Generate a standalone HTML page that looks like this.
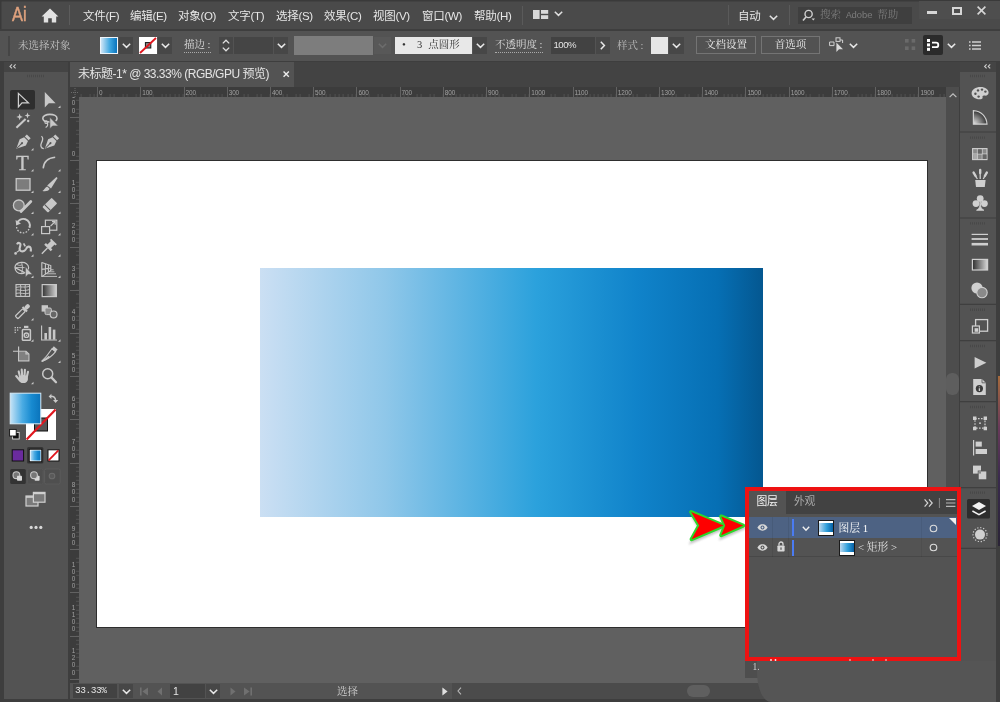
<!DOCTYPE html>
<html lang="zh-CN">
<head>
<meta charset="utf-8">
<title>Adobe Illustrator</title>
<style>
*{box-sizing:border-box;margin:0;padding:0}
html,body{width:1000px;height:702px;overflow:hidden;background:#3e3e3e}
html{opacity:.9999}
body{position:relative;font-family:"Liberation Sans","Noto Sans CJK SC",sans-serif;font-size:12px;color:#dcdcdc}
.a{position:absolute}
.sans{font-family:"Liberation Sans","Noto Sans CJK SC",sans-serif}
.serif{font-family:"Liberation Serif","Noto Serif CJK SC",serif}
.t{position:absolute;white-space:nowrap;line-height:1}
svg{position:absolute;overflow:visible}
/* menubar */
#menubar{left:0;top:0;width:1000px;height:29px;background:#4a4a4a;border-top:1px solid #3a3a3a;box-shadow:inset 1.5px 0.5px 0 #3a3a3a}
#menubar .m{position:absolute;top:8px;font-size:11.5px;line-height:15px;color:#e6e6e6;white-space:nowrap;letter-spacing:-0.3px}
/* control bar */
#ctrl{left:0;top:30.5px;width:1000px;height:30.5px;background:#535353}
#ctrl .lbl{position:absolute;top:8.5px;font-size:10.5px;line-height:13px;color:#c4c4c4;white-space:nowrap}
.dd{position:absolute;background:#474747}
/* tab bar */
#tabbar{left:70px;top:62px;width:890px;height:25px;background:#434343}
#tab{left:0;top:0;width:224px;height:25px;background:#535353}
/* toolbox */
#tbx{left:4px;top:62px;width:64px;height:637px;background:#535353}
#tbxh{left:0;top:0;width:64px;height:10px;background:#444}
/* canvas */
#canvas{left:70px;top:87px;width:876px;height:596px;background:#606060;overflow:hidden}
#hr{left:0;top:0;width:876px;height:10px;background:#3c3c3c}
#vr{left:0;top:0;width:9px;height:596px;background:#3c3c3c}
#art{left:26.3px;top:72.5px;width:831.7px;height:468px;background:#fff;border:1.3px solid #2e2e2e}
#grad{left:190.4px;top:180.8px;width:502.4px;height:249.5px;background:linear-gradient(90deg,#cbdff3 0%,#8fc7e9 25%,#2ba1dc 55%,#1083ca 75%,#066fb4 91%,#045790 100%)}

#hr i{position:absolute;top:0;width:1px;height:10px;background:#626262}
#hr b{position:absolute;top:2px;font:normal 6.4px/7px "Liberation Sans",sans-serif;color:#a0a0a0;letter-spacing:-0.1px}
#hr .tk{position:absolute;left:0;bottom:0;width:100%;height:3px;background:repeating-linear-gradient(90deg,#707070 0,#707070 0.8px,transparent 0.8px,transparent 4.323px);background-position:26.6px 0;opacity:.4}
#vr i{position:absolute;left:0;height:1px;width:9px;background:#626262}
#vr b{position:absolute;left:1px;width:5px;font:normal 6.4px/7.2px "Liberation Sans",sans-serif;color:#a0a0a0;text-align:center}
#vr u{display:block;text-decoration:none;height:7.2px}
#vr .tk{position:absolute;right:0;top:0;height:100%;width:3px;background:repeating-linear-gradient(180deg,#707070 0,#707070 0.8px,transparent 0.8px,transparent 4.323px);background-position:0 29.8px;opacity:.4}
#corner{left:0;top:0;width:9px;height:10px;background:#3c3c3c}
/* status */
#status{left:70px;top:683px;width:876px;height:16px;background:#535353}
/* vscroll */
#vs{left:946px;top:87px;width:13px;height:596px;background:#4d4d4d}
/* dock */
#dock{left:960px;top:62px;width:36px;height:640px;background:#535353}
#dockh{left:0;top:0;width:36px;height:10px;background:#444}
/* layers */
#lay{left:745px;top:486.5px;width:215.5px;height:174.5px;border:4px solid #ee1212;background:#535353}
</style>
</head>
<body>
<!-- MENUBAR -->
<div class="a" id="menubar">
  <div class="t sans" style="left:11.5px;top:2.5px;font-size:20px;color:#dfa27e;-webkit-text-stroke:0.45px #dfa27e;transform:scaleX(0.82);transform-origin:0 0">Ai</div>
  <svg style="left:41px;top:6.5px" width="18" height="15" viewBox="0 0 18 15"><path d="M9 0.6 L0.6 8.6 H2.8 V14.6 H7.2 V10.2 H10.8 V14.6 H15.2 V8.6 H17.4 Z" fill="#e2e2e2"/></svg>
  <div class="a" style="left:68.5px;top:4px;width:1px;height:20px;background:#5c5c5c"></div>
  <span class="m" style="left:83px">文件(F)</span>
  <span class="m" style="left:130px">编辑(E)</span>
  <span class="m" style="left:178px">对象(O)</span>
  <span class="m" style="left:228px">文字(T)</span>
  <span class="m" style="left:276px">选择(S)</span>
  <span class="m" style="left:324px">效果(C)</span>
  <span class="m" style="left:373px">视图(V)</span>
  <span class="m" style="left:422px">窗口(W)</span>
  <span class="m" style="left:474px">帮助(H)</span>
  <span class="m" style="left:738px">自动</span>

  <svg style="left:533px;top:8.6px" width="16" height="10" viewBox="0 0 16 10"><rect x="0" y="0" width="6.6" height="9" fill="#d8d8d8"/><rect x="8" y="0" width="7.2" height="3.8" fill="#d8d8d8"/><rect x="8" y="5.2" width="7.2" height="3.8" fill="#d8d8d8"/></svg>
  <div class="a" style="left:521.5px;top:5px;width:1px;height:19px;background:#5a5a5a"></div>
  <svg style="left:554.4px;top:10.2px" width="9" height="6" viewBox="0 0 9 6"><path d="M0.8 0.8 L4.5 4.4 L8.2 0.8" stroke="#e0e0e0" stroke-width="1.5" fill="none"/></svg>
  <div class="a" style="left:728px;top:4px;width:1px;height:20px;background:#5a5a5a"></div>
  <svg style="left:769px;top:14px" width="9" height="6" viewBox="0 0 9 6"><path d="M0.8 0.8 L4.5 4.4 L8.2 0.8" stroke="#e0e0e0" stroke-width="1.5" fill="none"/></svg>
  <div class="a" style="left:789px;top:4px;width:1px;height:20px;background:#5a5a5a"></div>
  <div class="a" style="left:798px;top:6px;width:114px;height:17px;background:#3f3f3f">
    <svg style="left:4px;top:2px" width="14" height="13" viewBox="0 0 14 13"><circle cx="6.6" cy="5" r="3.6" stroke="#d0d0d0" stroke-width="1.4" fill="none"/><path d="M4 8 L1 11.6" stroke="#d0d0d0" stroke-width="1.6"/><path d="M9.6 9.6 H13 L11.3 11.6 Z" fill="#d0d0d0"/></svg>
    <span class="t serif" style="left:22px;top:3px;font-size:10.5px;color:#7c7c7c">搜索<span style="font-family:'Liberation Mono',monospace;font-size:9.5px;letter-spacing:-0.45px;margin:0 5px">Adobe</span>帮助</span>
  </div>
  <div class="a" style="left:919px;top:0;width:81px;height:18px;background:#4e4e4e"></div>
  <div class="a" style="left:927px;top:10px;width:10px;height:3px;background:#d6d6d6"></div>
  <div class="a" style="left:952px;top:6px;width:10px;height:8px;border:2px solid #d6d6d6"></div>
  <svg style="left:977px;top:5px" width="9" height="9" viewBox="0 0 9 9"><path d="M0.6 0.6 L8.4 8.4 M8.4 0.6 L0.6 8.4" stroke="#d6d6d6" stroke-width="1.6"/></svg>
</div>
<!-- CONTROL BAR -->
<div class="a" id="ctrl">

  <div class="a" style="left:8px;top:5px;width:2px;height:20px;background:#454545"></div>
  <span class="lbl serif" style="left:18px">未选择对象</span>
  <div class="a" style="left:100px;top:6px;width:18px;height:17px;border:1px solid #eef5fb;background:linear-gradient(90deg,#cfe5f6,#3fa7e0 55%,#0a74bd)"></div>
  <div class="dd" style="left:119px;top:6px;width:14px;height:17px;background:#474747"><svg style="left:2.5px;top:6px" width="9" height="6" viewBox="0 0 9 6"><path d="M0.8 0.8 L4.5 4.4 L8.2 0.8" stroke="#e8e8e8" stroke-width="1.5" fill="none"/></svg></div>
  <div class="a" style="left:139px;top:6px;width:18px;height:17px;background:#fff">
    <svg style="left:0;top:0" width="18" height="17" viewBox="0 0 18 17"><rect x="6.4" y="5.6" width="5.4" height="5.4" fill="#888" stroke="#111" stroke-width="1"/><path d="M1 16 L17 1" stroke="#e0161e" stroke-width="1.8"/></svg>
  </div>
  <div class="dd" style="left:158px;top:6px;width:14px;height:17px;background:#474747"><svg style="left:2.5px;top:6px" width="9" height="6" viewBox="0 0 9 6"><path d="M0.8 0.8 L4.5 4.4 L8.2 0.8" stroke="#e8e8e8" stroke-width="1.5" fill="none"/></svg></div>
  <span class="lbl serif" style="left:184px;color:#dedede;border-bottom:1px dotted #aaa;line-height:12.5px">描边 :</span>
  <div class="dd" style="left:219px;top:6px;width:14px;height:17px">
    <svg style="left:3px;top:2px" width="8" height="13" viewBox="0 0 8 13"><path d="M0.8 4.4 L4 1.2 L7.2 4.4 M0.8 8.6 L4 11.8 L7.2 8.6" stroke="#e0e0e0" stroke-width="1.3" fill="none"/></svg>
  </div>
  <div class="dd" style="left:234px;top:6px;width:39px;height:17px;background:#454545"></div>
  <div class="dd" style="left:274px;top:6px;width:14px;height:17px;background:#474747"><svg style="left:2.5px;top:6px" width="9" height="6" viewBox="0 0 9 6"><path d="M0.8 0.8 L4.5 4.4 L8.2 0.8" stroke="#e8e8e8" stroke-width="1.5" fill="none"/></svg></div>
  <div class="a" style="left:294px;top:5px;width:79px;height:19px;background:#7d7d7d"></div>
  <div class="dd" style="left:374px;top:6px;width:17px;height:17px;background:#585858"><svg style="left:4.0px;top:6px" width="9" height="6" viewBox="0 0 9 6"><path d="M0.8 0.8 L4.5 4.4 L8.2 0.8" stroke="#6c6c6c" stroke-width="1.5" fill="none"/></svg></div>
  <div class="a" style="left:395px;top:6px;width:77px;height:17px;background:#e8e8e8">
    <span class="t serif" style="left:7px;top:2.5px;font-size:11px;color:#333">•</span>
    <span class="t serif" style="left:22px;top:3px;font-size:10.5px;color:#333">3<span style="margin-left:6px">点圆形</span></span>
  </div>
  <div class="dd" style="left:473px;top:6px;width:14px;height:17px;background:#474747"><svg style="left:2.5px;top:6px" width="9" height="6" viewBox="0 0 9 6"><path d="M0.8 0.8 L4.5 4.4 L8.2 0.8" stroke="#e8e8e8" stroke-width="1.5" fill="none"/></svg></div>
  <span class="lbl serif" style="left:495px;color:#dedede;border-bottom:1px dotted #aaa;line-height:12.5px">不透明度 :</span>
  <div class="dd" style="left:551px;top:6px;width:44px;height:17px;background:#424242"><span class="t sans" style="left:2.5px;top:3px;font-size:9.6px;color:#e4e4e4;letter-spacing:-0.5px">100%</span></div>
  <div class="dd" style="left:596px;top:6px;width:14px;height:17px"><svg style="left:4px;top:4px" width="6" height="9" viewBox="0 0 6 9"><path d="M0.8 0.8 L4.4 4.5 L0.8 8.2" stroke="#e8e8e8" stroke-width="1.5" fill="none"/></svg></div>
  <span class="lbl serif" style="left:617px;color:#bdbdbd">样式 :</span>
  <div class="a" style="left:651px;top:6px;width:17px;height:17px;background:#e6e6e6"></div>
  <div class="dd" style="left:669px;top:6px;width:15px;height:17px;background:#474747"><svg style="left:3.0px;top:6px" width="9" height="6" viewBox="0 0 9 6"><path d="M0.8 0.8 L4.5 4.4 L8.2 0.8" stroke="#e8e8e8" stroke-width="1.5" fill="none"/></svg></div>
  <div class="a" style="left:696px;top:5px;width:60px;height:18px;border:1px solid #747474;background:#525252"><span class="t serif" style="left:0;width:58px;text-align:center;top:3px;font-size:10.5px;color:#ededed">文档设置</span></div>
  <div class="a" style="left:761px;top:5px;width:59px;height:18px;border:1px solid #747474;background:#525252"><span class="t serif" style="left:0;width:57px;text-align:center;top:3px;font-size:10.5px;color:#ededed">首选项</span></div>
  <svg style="left:829px;top:6px" width="17" height="16" viewBox="0 0 17 16"><rect x="7" y="0.8" width="4" height="3.6" stroke="#d0d0d0" stroke-width="1" fill="none"/><path d="M0.6 5 H5 V8.6 H0.6 Z" stroke="#d0d0d0" stroke-width="1" fill="none"/><path d="M7.4 5.4 V15 L10 12.2 H14 Z" fill="#d8d8d8"/><path d="M11 3 H13.6 V6" stroke="#d0d0d0" stroke-width="1" fill="none"/></svg>
  <svg style="left:849px;top:12px" width="9" height="6" viewBox="0 0 9 6"><path d="M0.8 0.8 L4.5 4.4 L8.2 0.8" stroke="#e8e8e8" stroke-width="1.5" fill="none"/></svg>
  <svg style="left:905px;top:8px" width="11" height="12" viewBox="0 0 11 12" fill="#6a6a6a"><rect x="0" y="0" width="3.6" height="3.6"/><rect x="6.6" y="0" width="3.6" height="3.6"/><rect x="0" y="7.4" width="3.6" height="3.6"/><rect x="6.6" y="7.4" width="3.6" height="3.6"/></svg>
  <div class="a" style="left:923px;top:4px;width:20px;height:20px;background:#2b2b2b;border-radius:2px">
    <svg style="left:4px;top:4px" width="13" height="12" viewBox="0 0 13 12"><rect x="0" y="0" width="3" height="3" fill="#fff"/><rect x="0" y="4.4" width="3" height="3" fill="#fff"/><rect x="0" y="8.8" width="3" height="3" fill="#fff"/><path d="M5 3.6 H9 A2.2 2.2 0 0 1 9 8.2 H5" stroke="#fff" stroke-width="1.8" fill="none"/></svg>
  </div>
  <svg style="left:947px;top:12px" width="9" height="6" viewBox="0 0 9 6"><path d="M0.8 0.8 L4.5 4.4 L8.2 0.8" stroke="#e8e8e8" stroke-width="1.5" fill="none"/></svg>
  <svg style="left:969px;top:10px" width="12" height="9" viewBox="0 0 12 9"><path d="M3 1 H12 M3 4.5 H12 M3 8 H12" stroke="#d0d0d0" stroke-width="1.4"/><path d="M0 1 H1.6 M0 4.5 H1.6 M0 8 H1.6" stroke="#d0d0d0" stroke-width="1.4"/></svg>
</div>
<!-- TOOLBOX -->
<div class="a" id="tbx"><div class="a" id="tbxh"></div></div>
<svg id="tools" style="left:0;top:0" width="70" height="702" viewBox="0 0 70 702" fill="none" stroke="none">
<defs>
<linearGradient id="gfill" x1="0" y1="0" x2="1" y2="0"><stop offset="0" stop-color="#c6e3f6"/><stop offset="0.4" stop-color="#4aabe3"/><stop offset="0.7" stop-color="#178ad0"/><stop offset="1" stop-color="#0a73bb"/></linearGradient>
<linearGradient id="ggray" x1="0" y1="0" x2="1" y2="0"><stop offset="0" stop-color="#333"/><stop offset="1" stop-color="#d0d0d0"/></linearGradient>
<path id="fly" d="M2.5 0 V2.5 H0 Z" fill="#c8c8c8"/>
<g id="pen"><path d="M0 8.2 L-4.2 0.5 L-2.6 -3.4 H2.6 L4.2 0.5 Z" fill="#c8c8c8"/><rect x="-2.6" y="-6.6" width="5.2" height="2.4" fill="#c8c8c8"/><path d="M0 7.5 V2" stroke="#535353" stroke-width="0.9"/><circle cx="0" cy="1.5" r="1" fill="#535353"/></g>
</defs>
<!-- row0 -->
<rect x="10" y="90" width="25" height="19.5" rx="2" fill="#2e2e2e"/>
<path d="M18.4 93.4 V106.8 L22 102.8 H28.4 Z" stroke="#cfcfcf" stroke-width="1.25" stroke-linejoin="miter"/>
<path d="M44.8 92 V107.6 L48.8 103.2 H55.6 Z" fill="#c8c8c8"/>
<use href="#fly" x="58" y="105.5"/>
<!-- row1 wand -->
<path d="M16.4 127.8 L25.6 119" stroke="#c8c8c8" stroke-width="2.1"/>
<path d="M19.6 113.6 L20.5 116 L22.9 116.9 L20.5 117.8 L19.6 120.2 L18.7 117.8 L16.3 116.9 L18.7 116 Z" fill="#c8c8c8"/>
<path d="M27.5 112.6 L28.3 114.7 L30.4 115.5 L28.3 116.3 L27.5 118.4 L26.7 116.3 L24.6 115.5 L26.7 114.7 Z" fill="#c8c8c8"/>
<circle cx="28.2" cy="121" r="1.2" fill="#c8c8c8"/>
<!-- lasso -->
<path d="M50 122 C45 122 42.8 120 42.8 118.2 C42.8 116 46 114.4 49.8 114.4 C53.8 114.4 57 116 57 118.4 C57 119.4 56.4 120.2 55.6 120.8" stroke="#c8c8c8" stroke-width="1.6"/>
<circle cx="46.2" cy="122.2" r="1.3" stroke="#c8c8c8" stroke-width="1.1"/>
<path d="M47.4 122.8 C48 124.6 47.4 126.6 45.6 127.6" stroke="#c8c8c8" stroke-width="1.2"/>
<path d="M49.8 117.2 V128.8 L52.6 126 H58.4 Z" fill="#c8c8c8" stroke="#535353" stroke-width="0.7"/>
<!-- row2 pen -->
<g transform="translate(23.2,141.9) rotate(45) scale(1.04,1.19)"><use href="#pen"/></g>
<use href="#fly" x="31" y="148"/>
<g transform="translate(51.65,141.9) rotate(45) scale(1.04,1.19)"><use href="#pen"/></g>
<path d="M41.4 136.2 C43.6 137.6 42.6 140.6 41.4 143 C40.2 145.6 41 148.6 43.8 148.6" stroke="#c8c8c8" stroke-width="1.3"/>
<!-- row3 T -->
<text x="22.5" y="169.5" text-anchor="middle" font-family="Liberation Serif, serif" font-size="21" fill="#c8c8c8" stroke="#c8c8c8" stroke-width="0.3">T</text>
<use href="#fly" x="31" y="169"/>
<path d="M43.2 168.4 C43.5 162 48 158 55.2 157.2" stroke="#c8c8c8" stroke-width="1.5"/>
<use href="#fly" x="58" y="169"/>
<!-- row4 rect / brush -->
<rect x="16.2" y="178.6" width="13.8" height="11.6" fill="#7c7c7c" stroke="#c8c8c8" stroke-width="1.3"/>
<use href="#fly" x="31" y="190.5"/>
<path d="M56.4 177 L57.6 178 L51 188.6 L47.2 185.6 Z" fill="#c8c8c8"/>
<path d="M47.2 186.6 L49.6 188.8 C48.6 191.4 45 191.4 42.4 191 C44.4 190 44.8 187.4 47.2 186.6 Z" fill="#c8c8c8"/>
<use href="#fly" x="58" y="190.5"/>
<!-- row5 shaper / eraser -->
<circle cx="18.8" cy="205.4" r="5.4" fill="#7c7c7c" stroke="#c8c8c8" stroke-width="1.3"/>
<path d="M30.8 201.6 L21 211.6" stroke="#c8c8c8" stroke-width="2.8" stroke-linecap="round"/>
<use href="#fly" x="31" y="211.5"/>
<g transform="translate(49.8,205.2) rotate(-45)"><rect x="-6.6" y="-4" width="13.2" height="8" rx="1" fill="#c8c8c8"/><path d="M-3.2 -4 V4" stroke="#535353" stroke-width="1"/></g>
<use href="#fly" x="58" y="211.5"/>
<!-- row6 rotate / scale -->
<path d="M17 223.5 A6.6 6.6 0 0 1 29.6 227.6" stroke="#c8c8c8" stroke-width="1.9"/>
<path d="M29.4 226 A6.4 6.4 0 1 1 16.6 227" stroke="#c8c8c8" stroke-width="1.3" stroke-dasharray="1.6 1.4"/>
<path d="M15.6 220 L16.2 225.4 L21 223.6 Z" fill="#c8c8c8"/>
<use href="#fly" x="31" y="233"/>
<rect x="45.4" y="220.2" width="11.4" height="10" stroke="#c8c8c8" stroke-width="1.2"/>
<rect x="41.6" y="226.6" width="8" height="7" stroke="#c8c8c8" stroke-width="1.2" fill="#535353"/>
<path d="M50.6 226 L55 221.8 M52 221.6 H55.2 V224.8" stroke="#c8c8c8" stroke-width="1.1"/>
<use href="#fly" x="58" y="233"/>
<!-- row7 warp / pin -->
<circle cx="15.6" cy="253.4" r="1.35" fill="#c8c8c8"/>
<path d="M16.6 252.4 L19.6 250.2" stroke="#c8c8c8" stroke-width="1.1"/>
<path d="M17 244.4 C18 242 20.8 242.6 20.4 245.2 C20 247.6 18.4 249.4 20.6 250.8 C23 252.2 25.2 250.6 26.2 248.6 C27.2 246.4 29.8 245.8 30.6 247.8 C31.2 249.4 30.8 250.8 30.6 251.6" stroke="#c8c8c8" stroke-width="2.1"/>
<path d="M23.6 243.4 L25.2 246.4" stroke="#c8c8c8" stroke-width="1.7"/>
<use href="#fly" x="31" y="254.2"/>
<g transform="translate(47.9,247.6) rotate(45)"><rect x="-2.6" y="-7.6" width="5.2" height="6.4" fill="#c8c8c8"/><rect x="-4.6" y="-1.8" width="9.2" height="2.4" fill="#c8c8c8"/><rect x="-4" y="-8.6" width="8" height="1.8" fill="#c8c8c8"/><path d="M0 0.6 V8.6" stroke="#c8c8c8" stroke-width="1.4"/></g>
<use href="#fly" x="58" y="254.2"/>
<!-- row8 shape builder / perspective -->
<path d="M15 267.6 C15 264.6 17.4 262.8 21.4 262.4 C25.4 262 28.6 264.4 28.6 267.6 C28.6 268.4 28.4 269 28 269.6 M25 272.8 C23.8 273.4 22.6 273.6 21.4 273.6 C17.6 273.6 15 271 15 267.6 Z" stroke="#c8c8c8" stroke-width="1.2"/>
<path d="M15.4 267.6 H24.6 M21.6 262.6 C22.6 265 22.8 269 21.8 273.4 M17 264.6 C19 265.6 20.6 265.6 22 264.8" stroke="#c8c8c8" stroke-width="0.9"/>
<path d="M25.4 266.6 V277.2 L28 274.6 H32.6 Z" fill="#c8c8c8" stroke="#535353" stroke-width="0.6"/>
<use href="#fly" x="31" y="275.5"/>
<g stroke="#c8c8c8" stroke-width="1.1">
<path d="M41.8 262.2 V277 M41.8 262.4 L50.8 265.6 V270.4 L41.8 276.6 M45.4 263.8 V274 M48.4 264.8 V272 M41.8 269.4 L50.8 268"/>
<path d="M50.8 269.8 H53.6 M49.4 271.8 H54.4 M46.6 273.8 H56 M42 276.4 H57" stroke-width="0.9"/>
</g>
<use href="#fly" x="58" y="275.5"/>
<!-- row9 mesh / gradient -->
<g stroke="#c8c8c8" stroke-width="1.1">
<rect x="16" y="284.6" width="13.6" height="11.8"/>
<path d="M16 290 C19 289 21 292 29.6 289.6 M20.4 284.6 C22 288 19 292 21 296.4 M25.4 284.6 C24 288 27 292 25 296.4 M16 293.4 C20 292 25 295 29.6 293 M16 287.4 C20 286 25 288 29.6 286.4" stroke-width="0.9"/>
</g>
<rect x="42.2" y="284.6" width="14.2" height="12" fill="url(#ggray)" stroke="#c8c8c8" stroke-width="1.2"/>
<!-- row10 eyedropper / blend -->
<g transform="translate(22.5,311.5) rotate(45)">
<rect x="-1.9" y="-2" width="3.8" height="10.4" rx="0.8" stroke="#c8c8c8" stroke-width="1.2"/>
<rect x="-3.2" y="-4.2" width="6.4" height="2" fill="#c8c8c8"/>
<rect x="-2" y="-9.4" width="4" height="5.6" rx="1.6" fill="#c8c8c8"/>
</g>
<use href="#fly" x="31" y="318"/>
<rect x="41.6" y="305.2" width="6.4" height="6.4" fill="#c8c8c8"/>
<rect x="45" y="308" width="6.4" height="6.6" rx="1.4" fill="#8a8a8a" stroke="#c8c8c8" stroke-width="1"/>
<circle cx="53.6" cy="314.4" r="3.4" fill="#666" stroke="#c8c8c8" stroke-width="1.2"/>
<!-- row11 spray / graph -->
<g fill="#c8c8c8">
<rect x="14.6" y="327" width="1.3" height="1.3"/><rect x="17" y="327" width="1.3" height="1.3"/><rect x="19.4" y="327" width="1.3" height="1.3"/>
<rect x="14.6" y="329.4" width="1.3" height="1.3"/><rect x="17" y="329.4" width="1.3" height="1.3"/>
<rect x="14.6" y="331.8" width="1.3" height="1.3"/>
<rect x="24" y="325.8" width="4.4" height="2.2"/>
</g>
<rect x="22.4" y="329.4" width="8" height="10.8" rx="0.8" stroke="#c8c8c8" stroke-width="1.5"/>
<circle cx="26.4" cy="335.2" r="2.2" stroke="#c8c8c8" stroke-width="1.4"/><circle cx="26.4" cy="335.2" r="0.8" fill="#c8c8c8"/>
<use href="#fly" x="31" y="339.2"/>
<path d="M41.6 325.4 V340 H57" stroke="#c8c8c8" stroke-width="1.1"/>
<rect x="44.4" y="333" width="2.6" height="6.6" fill="#c8c8c8"/><rect x="48.6" y="327" width="2.6" height="12.6" fill="#c8c8c8"/><rect x="52.8" y="329.6" width="2.6" height="10" fill="#c8c8c8"/>
<use href="#fly" x="58" y="339.2"/>
<!-- row12 artboard / slice -->
<path d="M19.2 352 H25.8 L28.4 354.4 V360.2 H19.2 Z" fill="#808080"/>
<path d="M18.6 346.4 V360.8 H28.9 V354 L26 351.2 H13 M26 351.2 V354 H28.9" stroke="#c8c8c8" stroke-width="1.15"/>
<path d="M41.6 361.4 C46 357.4 49.6 352.4 52 348.8 L55.6 351.6 C52.4 355.8 48 359.4 41.6 361.4 Z" stroke="#c8c8c8" stroke-width="1.1"/>
<path d="M51.6 349 L53.8 346.2 L57.6 349.4 L55.4 352 Z" fill="#c8c8c8"/>
<path d="M42 361.2 C45.4 359.6 47.6 358 49.4 356.4" stroke="#c8c8c8" stroke-width="1.6"/>
<use href="#fly" x="58" y="360.6"/>
<!-- row13 hand / zoom -->
<ellipse cx="23.3" cy="379" rx="4.7" ry="4.1" fill="#c8c8c8"/>
<path d="M20.2 377.4 L18.7 371.4 M22.2 376.4 L21.7 369.6 M24.5 376.4 L24.9 369.8 M26.7 377.4 L28 371.8 M19.8 380.4 L16.2 376" stroke="#c8c8c8" stroke-width="2.1" stroke-linecap="round"/>
<use href="#fly" x="31" y="381.8"/>
<circle cx="47.7" cy="373.8" r="5" stroke="#c8c8c8" stroke-width="1.5"/>
<path d="M51.6 377.6 L56 382.2" stroke="#c8c8c8" stroke-width="2.3" stroke-linecap="round"/>
<!-- fill/stroke -->
<rect x="26" y="409" width="30" height="31" fill="#fff"/>
<rect x="34.5" y="418" width="13" height="13" fill="#555" stroke="#111" stroke-width="1"/>
<path d="M26.6 439.6 L55.6 409.6" stroke="#e0161e" stroke-width="2.2"/>
<rect x="10.2" y="393.2" width="30.6" height="30.6" fill="url(#gfill)" stroke="#d6ebf8" stroke-width="1"/>
<path d="M50.4 396.2 C53.4 395.8 55.6 397.6 55.6 400.4" stroke="#c8c8c8" stroke-width="1.5"/>
<path d="M48.6 396.4 L51.4 393.8 V399 Z M55.6 403 L53 400 H58.2 Z" fill="#c8c8c8"/>
<rect x="12.6" y="432.4" width="6.6" height="6.6" fill="#111" stroke="#ddd" stroke-width="0.9"/>
<rect x="9.6" y="429.4" width="6.6" height="6.6" fill="#fff" stroke="#111" stroke-width="0.9"/>
<!-- color modes -->
<rect x="27" y="447" width="16.4" height="16.4" rx="1.5" fill="#353535"/>
<rect x="12.2" y="449.8" width="11.4" height="11.2" fill="#6a2b9e" stroke="#111" stroke-width="1"/>
<rect x="30" y="450" width="11" height="11" fill="url(#gfill)" stroke="#fff" stroke-width="1"/>
<rect x="29.2" y="449.2" width="12.6" height="12.6" stroke="#111" stroke-width="0.8"/>
<rect x="48" y="449.8" width="11" height="11.2" fill="#fff" stroke="#111" stroke-width="1"/>
<path d="M48.6 460.4 L58.4 450.4" stroke="#e0161e" stroke-width="1.8"/>
<!-- draw modes -->
<rect x="10.2" y="469" width="15.6" height="15" rx="1.5" fill="#333"/>
<rect x="27.4" y="469" width="15.6" height="15" rx="1.5" fill="#4f4f4f" stroke="#5a5a5a" stroke-width="0.6"/>
<rect x="44.6" y="469" width="15.6" height="15" rx="1.5" fill="#4f4f4f" stroke="#5e5e5e" stroke-width="0.8"/>
<circle cx="16.4" cy="475.2" r="3.4" fill="#777" stroke="#c8c8c8" stroke-width="1.1"/><rect x="17" y="475.8" width="5" height="5" rx="0.8" fill="#d8d8d8"/>
<rect x="34.6" y="475.8" width="5" height="5" rx="0.8" fill="#d8d8d8"/><circle cx="34" cy="475.2" r="3.4" fill="#777" stroke="#c8c8c8" stroke-width="1.1"/>
<circle cx="52" cy="476" r="2.8" fill="#5a5a5a" stroke="#6c6c6c" stroke-width="1.1"/>
<!-- screen mode -->
<rect x="26" y="496" width="12" height="10" fill="#7a7a7a" stroke="#d0d0d0" stroke-width="1.2"/><path d="M26 497 H38" stroke="#d0d0d0" stroke-width="1.6"/>
<rect x="33.4" y="492.4" width="11.6" height="9.8" fill="#7a7a7a" stroke="#d0d0d0" stroke-width="1.2"/><path d="M33.4 493.4 H45" stroke="#d0d0d0" stroke-width="1.6"/>
<circle cx="31.2" cy="527.4" r="1.6" fill="#d8d8d8"/><circle cx="36" cy="527.4" r="1.6" fill="#d8d8d8"/><circle cx="40.8" cy="527.4" r="1.6" fill="#d8d8d8"/>
<!-- header -->
<path d="M12 64.4 L10 66.4 L12 68.4 M15.6 64.4 L13.6 66.4 L15.6 68.4" stroke="#c8c8c8" stroke-width="1.1"/>
<path d="M27 76 H44" stroke="#484848" stroke-width="2.4" stroke-dasharray="1 1"/>
</svg>

<!-- TAB BAR -->
<div class="a" id="tabbar"><div class="a" id="tab">
  <span class="t sans" style="left:8px;top:6px;font-size:12px;color:#e4e4e4;letter-spacing:-0.5px">未标题-1* @ 33.33% (RGB/GPU 预览)</span>
  <svg style="left:212.8px;top:9.3px" width="6.4" height="6.4" viewBox="0 0 7 7"><path d="M0.6 0.6 L6.4 6.4 M6.4 0.6 L0.6 6.4" stroke="#ececec" stroke-width="1.5"/></svg>
</div></div>
<!-- CANVAS -->
<div class="a" id="canvas">
  <div class="a" id="art"></div>
  <div class="a" id="grad"></div>
  <div class="a" id="hr"><div class="tk"></div><i style="left:27.0px"></i><b style="left:29.0px">0</b><i style="left:70.2px"></i><b style="left:72.2px">100</b><i style="left:113.5px"></i><b style="left:115.5px">200</b><i style="left:156.7px"></i><b style="left:158.7px">300</b><i style="left:199.9px"></i><b style="left:201.9px">400</b><i style="left:243.1px"></i><b style="left:245.1px">500</b><i style="left:286.4px"></i><b style="left:288.4px">600</b><i style="left:329.6px"></i><b style="left:331.6px">700</b><i style="left:372.8px"></i><b style="left:374.8px">800</b><i style="left:416.1px"></i><b style="left:418.1px">900</b><i style="left:459.3px"></i><b style="left:461.3px">1000</b><i style="left:502.5px"></i><b style="left:504.5px">1100</b><i style="left:545.8px"></i><b style="left:547.8px">1200</b><i style="left:589.0px"></i><b style="left:591.0px">1300</b><i style="left:632.2px"></i><b style="left:634.2px">1400</b><i style="left:675.4px"></i><b style="left:677.4px">1500</b><i style="left:718.7px"></i><b style="left:720.7px">1600</b><i style="left:761.9px"></i><b style="left:763.9px">1700</b><i style="left:805.1px"></i><b style="left:807.1px">1800</b><i style="left:848.4px"></i><b style="left:850.4px">1900</b></div>
  <div class="a" id="vr"><div class="tk"></div><i style="top:29.8px"></i><b style="top:5.2px"><u>1</u><u>0</u><u>0</u></b><i style="top:73.0px"></i><b style="top:62.8px"><u>0</u></b><i style="top:116.2px"></i><b style="top:91.6px"><u>1</u><u>0</u><u>0</u></b><i style="top:159.5px"></i><b style="top:134.9px"><u>2</u><u>0</u><u>0</u></b><i style="top:202.7px"></i><b style="top:178.1px"><u>3</u><u>0</u><u>0</u></b><i style="top:245.9px"></i><b style="top:221.3px"><u>4</u><u>0</u><u>0</u></b><i style="top:289.1px"></i><b style="top:264.5px"><u>5</u><u>0</u><u>0</u></b><i style="top:332.4px"></i><b style="top:307.8px"><u>6</u><u>0</u><u>0</u></b><i style="top:375.6px"></i><b style="top:351.0px"><u>7</u><u>0</u><u>0</u></b><i style="top:418.8px"></i><b style="top:394.2px"><u>8</u><u>0</u><u>0</u></b><i style="top:462.1px"></i><b style="top:437.5px"><u>9</u><u>0</u><u>0</u></b><i style="top:505.3px"></i><b style="top:473.5px"><u>1</u><u>0</u><u>0</u><u>0</u></b><i style="top:548.5px"></i><b style="top:516.7px"><u>1</u><u>1</u><u>0</u><u>0</u></b><i style="top:591.8px"></i><b style="top:560.0px"><u>1</u><u>2</u><u>0</u><u>0</u></b></div><div class="a" id="corner"><svg style="left:1px;top:1px" width="8" height="9" viewBox="0 0 8 9"><path d="M4 0 V9 M0 4.5 H8" stroke="#777" stroke-width="0.8" stroke-dasharray="1 1"/></svg></div>
</div>
<div class="a" id="vs">
  <svg style="left:3px;top:6px" width="8" height="5" viewBox="0 0 8 5"><path d="M0.6 4.2 L4 0.8 L7.4 4.2" stroke="#c0c0c0" stroke-width="1.2" fill="none"/></svg>
  <div class="a" style="left:0;top:286px;width:13px;height:22px;border-radius:6px;background:#5e5e5e"></div>
</div>
<div class="a" id="status">
  <div class="a" style="left:3px;top:1px;width:44px;height:14px;background:#424242"><span class="t serif" style="left:2px;top:2px;font-size:10.5px;color:#e4e4e4;font-family:'Liberation Mono','Noto Serif CJK SC',monospace;font-size:9.5px;letter-spacing:-0.45px">33.33%</span></div>
  <div class="a" style="left:49px;top:1px;width:14px;height:14px;background:#474747"><svg style="left:2.5px;top:5px" width="9" height="6" viewBox="0 0 9 6"><path d="M0.8 0.8 L4.5 4.4 L8.2 0.8" stroke="#e8e8e8" stroke-width="1.5" fill="none"/></svg></div>
  <svg style="left:70px;top:4px" width="24" height="9" viewBox="0 0 24 9" fill="#707070"><rect x="0" y="0.5" width="1.6" height="8"/><path d="M8 0.5 V8.5 L2.4 4.5 Z"/><path d="M22 0.5 V8.5 L17.5 4.5 Z"/></svg>
  <div class="a" style="left:100px;top:1px;width:35px;height:14px;background:#424242"><span class="t sans" style="left:3px;top:2px;font-size:10.5px;color:#e4e4e4">1</span></div>
  <div class="a" style="left:136px;top:1px;width:14px;height:14px;background:#474747"><svg style="left:2.5px;top:5px" width="9" height="6" viewBox="0 0 9 6"><path d="M0.8 0.8 L4.5 4.4 L8.2 0.8" stroke="#e8e8e8" stroke-width="1.5" fill="none"/></svg></div>
  <svg style="left:160px;top:4px" width="24" height="9" viewBox="0 0 24 9" fill="#707070"><path d="M0.5 0.5 V8.5 L5.5 4.5 Z"/><path d="M14 0.5 V8.5 L19.6 4.5 Z"/><rect x="20.4" y="0.5" width="1.6" height="8"/></svg>
  <span class="t serif" style="left:267px;top:3.5px;font-size:10.5px;color:#d0d0d0">选择</span>
  <svg style="left:372px;top:4px" width="6" height="9" viewBox="0 0 6 9"><path d="M0.4 0.4 V8.6 L5.6 4.5 Z" fill="#e0e0e0"/></svg>
  <div class="a" style="left:382px;top:0;width:494px;height:16px;background:#4b4b4b"></div>
  <svg style="left:387px;top:4px" width="5" height="8" viewBox="0 0 5 8"><path d="M4 0.6 L1 4 L4 7.4" stroke="#b8b8b8" stroke-width="1.1" fill="none"/></svg>
  <div class="a" style="left:617px;top:2px;width:23px;height:12px;border-radius:6px;background:#5f5f5f"></div>
</div>
<!-- DOCK -->
<div class="a" id="dock"><div class="a" id="dockh"></div></div>
<svg id="dockicons" style="left:0;top:0" width="1000" height="702" viewBox="0 0 1000 702" fill="none">
<defs><linearGradient id="gg2" x1="0" y1="0" x2="1" y2="0"><stop offset="0" stop-color="#2e2e2e"/><stop offset="1" stop-color="#d8d8d8"/></linearGradient>
<radialGradient id="rg" cx="0" cy="1" r="1"><stop offset="0" stop-color="#e8e8e8"/><stop offset="1" stop-color="#333"/></radialGradient></defs>
<path d="M986.6 64.4 L984.6 66.4 L986.6 68.4 M990.2 64.4 L988.2 66.4 L990.2 68.4" stroke="#cfcfcf" stroke-width="1.1"/>
<path d="M970 76 H986" stroke="#484848" stroke-width="2.4" stroke-dasharray="1 1"/>
<!-- palette -->
<path d="M980.6 87 C985.4 87 988.6 89.6 988.6 92.6 C988.6 95.2 986.4 96 984.6 95.6 C983 95.2 982.2 96.2 982.6 97.2 C983 98.6 981.6 99.2 979.6 99.2 C975 99.2 971.6 96.6 971.6 93.2 C971.6 89.6 975.6 87 980.6 87 Z" fill="#cfcfcf"/>
<circle cx="975.4" cy="93.8" r="1.2" fill="#535353"/><circle cx="978" cy="90.4" r="1.2" fill="#535353"/><circle cx="982" cy="89.6" r="1.2" fill="#535353"/><circle cx="985.4" cy="91.6" r="1.2" fill="#535353"/><circle cx="978.6" cy="96.6" r="1.2" fill="#535353"/>
<!-- color guide -->
<path d="M973.4 110.6 C981 111 986.6 116.4 987 124.2 H973.4 Z" fill="url(#rg)" stroke="#cfcfcf" stroke-width="1.2"/>
<path d="M960 132 H996" stroke="#3f3f3f" stroke-width="1.2"/><path d="M970 137.6 H986" stroke="#484848" stroke-width="2.4" stroke-dasharray="1 1"/>
<!-- swatches -->
<rect x="972.6" y="148.6" width="14.4" height="11" fill="#8a8a8a" stroke="#cfcfcf" stroke-width="1.1"/>
<path d="M977.4 148.6 V159.6 M982.2 148.6 V159.6 M972.6 154 H987" stroke="#cfcfcf" stroke-width="0.9"/>
<rect x="977.8" y="149.4" width="4" height="4.2" fill="#666"/><rect x="982.6" y="154.4" width="4" height="4.6" fill="#666"/><rect x="973.2" y="154.4" width="3.8" height="4.6" fill="#aaa"/>
<!-- brushes -->
<path d="M975.2 180 H985.6 L984.8 187 H976 Z" fill="#cfcfcf"/>
<path d="M977.4 179 L974.6 174.6 M980.2 179 V171 M983.2 179 L985.8 174.6" stroke="#cfcfcf" stroke-width="1.3"/>
<path d="M973.6 172.6 L975.6 176 M980.2 170 V173 M986.8 172.6 L984.8 176" stroke="#cfcfcf" stroke-width="2.4" stroke-linecap="round"/>
<!-- symbols club -->
<circle cx="980.2" cy="198.6" r="3.4" fill="#cfcfcf"/><circle cx="976" cy="203.6" r="3.4" fill="#cfcfcf"/><circle cx="984.4" cy="203.6" r="3.4" fill="#cfcfcf"/>
<path d="M980.2 202 C980.2 207 979 209 976.6 210.2 H983.8 C981.4 209 980.2 207 980.2 202 Z" fill="#cfcfcf" stroke="#cfcfcf" stroke-width="1"/>
<path d="M960 218 H996" stroke="#3f3f3f" stroke-width="1.2"/><path d="M970 223.4 H986" stroke="#484848" stroke-width="2.4" stroke-dasharray="1 1"/>
<!-- stroke -->
<path d="M971.6 234.4 H988" stroke="#cfcfcf" stroke-width="1.2"/><path d="M971.6 239 H988" stroke="#cfcfcf" stroke-width="1.8"/><path d="M971.6 244.2 H988" stroke="#cfcfcf" stroke-width="2.6"/>
<!-- gradient -->
<rect x="972.4" y="259.4" width="15.2" height="10.6" fill="url(#gg2)" stroke="#cfcfcf" stroke-width="1.2"/>
<!-- transparency -->
<circle cx="977" cy="288" r="5.6" fill="#cfcfcf"/><circle cx="982" cy="292.6" r="5.2" fill="#8a8a8a" stroke="#cfcfcf" stroke-width="1.1"/>
<path d="M960 304.4 H996" stroke="#3f3f3f" stroke-width="1.2"/><path d="M970 309.8 H986" stroke="#484848" stroke-width="2.4" stroke-dasharray="1 1"/>
<!-- asset export -->
<rect x="975.6" y="319.6" width="12" height="11.6" stroke="#cfcfcf" stroke-width="1.3"/>
<rect x="972.4" y="326" width="7" height="7" fill="#535353" stroke="#cfcfcf" stroke-width="1.2"/><rect x="974.6" y="328.2" width="3.6" height="3.6" fill="#cfcfcf"/>
<path d="M960 340.6 H996" stroke="#3f3f3f" stroke-width="1.2"/><path d="M970 346 H986" stroke="#484848" stroke-width="2.4" stroke-dasharray="1 1"/>
<!-- play -->
<path d="M974.6 357 V368.6 L986.4 362.8 Z" fill="#cfcfcf"/>
<!-- doc info -->
<path d="M973.2 379 H982 L985.8 382.8 V395 H973.2 Z" fill="#cfcfcf"/><path d="M982 379 V382.8 H985.8" stroke="#535353" stroke-width="0.8"/>
<circle cx="979.4" cy="388.6" r="3.6" fill="#3a3a3a"/><path d="M979.4 386.4 V387.2 M979.4 388.2 V391" stroke="#cfcfcf" stroke-width="1.3"/>
<path d="M960 401.6 H996" stroke="#3f3f3f" stroke-width="1.2"/><path d="M970 407 H986" stroke="#484848" stroke-width="2.4" stroke-dasharray="1 1"/>
<!-- artboards -->
<rect x="975" y="418.6" width="10" height="9.6" stroke="#cfcfcf" stroke-width="1.2" stroke-dasharray="1.6 1.4"/>
<path d="M973 416.6 H976.4 V420 H973 Z M983.6 416.6 H987 V420 H983.6 Z M973 426.8 H976.4 V430.2 H973 Z M983.6 426.8 H987 V430.2 H983.6 Z" fill="#cfcfcf"/>
<rect x="979.2" y="422.4" width="1.6" height="1.6" fill="#cfcfcf"/>
<!-- align -->
<path d="M973.6 440 V455.6" stroke="#cfcfcf" stroke-width="1.2"/><rect x="975.6" y="441.6" width="6.2" height="5" fill="#cfcfcf"/><rect x="975.6" y="449" width="11.4" height="5" fill="#cfcfcf"/>
<!-- pathfinder -->
<rect x="973" y="465.6" width="8" height="8" fill="#cfcfcf"/><rect x="978.2" y="471" width="8.6" height="8.8" fill="#cfcfcf" stroke="#535353" stroke-width="0.9"/><rect x="978.6" y="471.4" width="2.4" height="2.2" fill="#8a8a8a"/>
<path d="M960 487.6 H996" stroke="#3f3f3f" stroke-width="1.2"/><path d="M970 492.6 H986" stroke="#484848" stroke-width="2.4" stroke-dasharray="1 1"/>
<!-- layers selected -->
<rect x="967" y="499" width="23" height="19.4" rx="1.5" fill="#2d2d2d"/>
<path d="M972.4 511 L979 514.6 L985.6 511" stroke="#f2f2f2" stroke-width="1.5"/>
<path d="M979 502 L986 506 L979 510 L972 506 Z" fill="#f2f2f2"/>
<!-- appearance -->
<circle cx="980" cy="534.6" r="5" fill="#cfcfcf"/><circle cx="980" cy="534.6" r="7" stroke="#cfcfcf" stroke-width="1.2" stroke-dasharray="1.2 1.8"/>
<path d="M960 548.4 H996" stroke="#3f3f3f" stroke-width="1.2"/>
</svg>
<div class="a" style="left:998px;top:376px;width:2px;height:170px;background:linear-gradient(180deg,#a66a3c,#6a3a5a 30%,#3a2a4e 60%,#2a2436)"></div>
<!-- LAYERS -->
<div class="a" id="lay">
  <div class="a" style="left:0;top:0;width:208px;height:23px;background:#424242"></div>
  <div class="a" style="left:0;top:0;width:37px;height:23px;background:#535353"></div>
  <span class="t sans" style="left:7.5px;top:5.5px;font-size:10.8px;color:#f4f4f4;letter-spacing:-0.2px">图层</span>
  <span class="t sans" style="left:45px;top:5.5px;font-size:10.8px;color:#a8a8a8;letter-spacing:-0.2px">外观</span>
  <svg style="left:175px;top:7px" width="33" height="10" viewBox="0 0 33 10"><path d="M0.6 1.4 L3.8 5 L0.6 8.6 M5 1.4 L8.2 5 L5 8.6" stroke="#d4d4d4" stroke-width="1.2" fill="none"/><path d="M15.4 0 V10" stroke="#8a8a8a" stroke-width="1"/><path d="M22 1.6 H31.4 M22 5 H31.4 M22 8.4 H31.4" stroke="#b8b8b8" stroke-width="1.1"/></svg>
  <div class="a" style="left:0;top:26.5px;width:208px;height:21px;background:#4d6283"></div>
  <div class="a" style="left:0;top:47.5px;width:208px;height:19px;background:#535353;border-bottom:1px solid #484848"></div>
  <div class="a" style="left:23px;top:26.5px;width:1px;height:40px;background:rgba(0,0,0,.07)"></div>
  <div class="a" style="left:39px;top:26.5px;width:1px;height:40px;background:rgba(0,0,0,.07)"></div>
  <div class="a" style="left:172px;top:26.5px;width:1px;height:40px;background:rgba(0,0,0,.06)"></div>
  <svg style="left:8px;top:33.5px" width="11" height="7" viewBox="0 0 11 7"><path d="M0.4 3.5 C2 0.8 4 0.3 5.5 0.3 C7 0.3 9 0.8 10.6 3.5 C9 6.2 7 6.7 5.5 6.7 C4 6.7 2 6.2 0.4 3.5 Z" fill="#d8d8d8"/><circle cx="5.5" cy="3.5" r="2" fill="#4d6283"/><circle cx="5.5" cy="3.5" r="0.9" fill="#d8d8d8"/></svg><svg style="left:8px;top:53px" width="11" height="7" viewBox="0 0 11 7"><path d="M0.4 3.5 C2 0.8 4 0.3 5.5 0.3 C7 0.3 9 0.8 10.6 3.5 C9 6.2 7 6.7 5.5 6.7 C4 6.7 2 6.2 0.4 3.5 Z" fill="#d8d8d8"/><circle cx="5.5" cy="3.5" r="2" fill="#535353"/><circle cx="5.5" cy="3.5" r="0.9" fill="#d8d8d8"/></svg>
  <svg style="left:28px;top:50px" width="8" height="11" viewBox="0 0 8 11"><rect x="0.4" y="4.4" width="7.2" height="6.2" rx="0.8" fill="#d8d8d8"/><path d="M2 4.6 V3 A2 2 0 0 1 6 3 V4.6" stroke="#d8d8d8" stroke-width="1.3" fill="none"/><rect x="3.4" y="6.4" width="1.2" height="2.4" fill="#535353"/></svg>
  <div class="a" style="left:42.5px;top:28.5px;width:2.4px;height:17px;background:#4a7bf2"></div>
  <div class="a" style="left:42.5px;top:49px;width:2.4px;height:16px;background:#4a7bf2"></div>
  <svg style="left:52.5px;top:35px" width="8" height="6" viewBox="0 0 8 6"><path d="M0.8 0.8 L4 4.2 L7.2 0.8" stroke="#f0f0f0" stroke-width="1.4" fill="none"/></svg>
  <div class="a" style="left:68.5px;top:29.5px;width:16px;height:16px;border:1px solid #1a1a1a;background:linear-gradient(180deg,#fff 0 2.5px,transparent 2.5px 11px,#fff 11px),linear-gradient(90deg,#bcd9f0,#2f9fdb 55%,#075fa3)"></div>
  <div class="a" style="left:89.5px;top:49px;width:16px;height:16px;border:1px solid #1a1a1a;background:linear-gradient(180deg,#fff 0 2.5px,transparent 2.5px 11px,#fff 11px),linear-gradient(90deg,#bcd9f0,#2f9fdb 55%,#075fa3)"></div>
  <span class="t serif" style="left:89.5px;top:32px;font-size:10.8px;color:#fff">图层 1</span>
  <span class="t serif" style="left:109px;top:51.5px;font-size:10.8px;color:#e2e2e2">&lt; 矩形 &gt;</span>
  <svg style="left:180px;top:33px" width="9" height="9" viewBox="0 0 9 9"><circle cx="4.5" cy="4.5" r="3.3" stroke="#dedede" stroke-width="1.1" fill="none"/></svg>
  <svg style="left:180px;top:52.5px" width="9" height="9" viewBox="0 0 9 9"><circle cx="4.5" cy="4.5" r="3.3" stroke="#dedede" stroke-width="1.1" fill="none"/></svg>
  <svg style="left:200px;top:27px" width="7" height="7" viewBox="0 0 7 7"><path d="M0 0 H7 V7 Z" fill="#f0f0f0"/></svg>
</div>
<div class="a" style="left:745px;top:661px;width:14px;height:17px;background:#4e4e4e"></div>
<div class="a" style="left:757px;top:661px;width:239px;height:41px;background:#555;border-bottom-left-radius:14px 30px"></div>
<span class="t serif" style="left:752.5px;top:663px;font-size:9.5px;color:#cfcfcf">1.</span>
<svg style="left:745px;top:656px" width="216" height="6" viewBox="0 0 216 6" fill="#f4f4f4"><circle cx="26" cy="4" r="0.9"/><circle cx="30.5" cy="4" r="0.9"/><circle cx="105" cy="4" r="0.8"/><circle cx="128" cy="4" r="0.8"/><circle cx="141" cy="4" r="0.8"/></svg>
<svg style="left:680px;top:500px" width="80" height="50" viewBox="680 500 80 50"><defs><filter id="sh" x="-20%" y="-20%" width="140%" height="150%"><feGaussianBlur stdDeviation="1.2"/></filter></defs>
<g opacity="0.35" transform="translate(0.5,2.5)" filter="url(#sh)"><path d="M691.2 512 L723.6 525.6 L691.6 539.2 L699.2 525.6 Z M721.2 516.4 L743.2 525.6 L721.2 535.2 L725.2 525.6 Z" fill="#555" stroke="#555" stroke-width="3"/></g>
<path d="M691.2 512 L723.6 525.6 L691.6 539.2 L699.2 525.6 Z" fill="#fe0000" stroke="#2bd92b" stroke-width="4" stroke-linejoin="round"/>
<path d="M721.2 516.4 L743.2 525.6 L721.2 535.2 L725.2 525.6 Z" fill="#fe0000" stroke="#2bd92b" stroke-width="4" stroke-linejoin="round"/>
<path d="M691.2 512 L723.6 525.6 L691.6 539.2 L699.2 525.6 Z M721.2 516.4 L743.2 525.6 L721.2 535.2 L725.2 525.6 Z" fill="#fe0000"/>
</svg>

</body>
</html>
